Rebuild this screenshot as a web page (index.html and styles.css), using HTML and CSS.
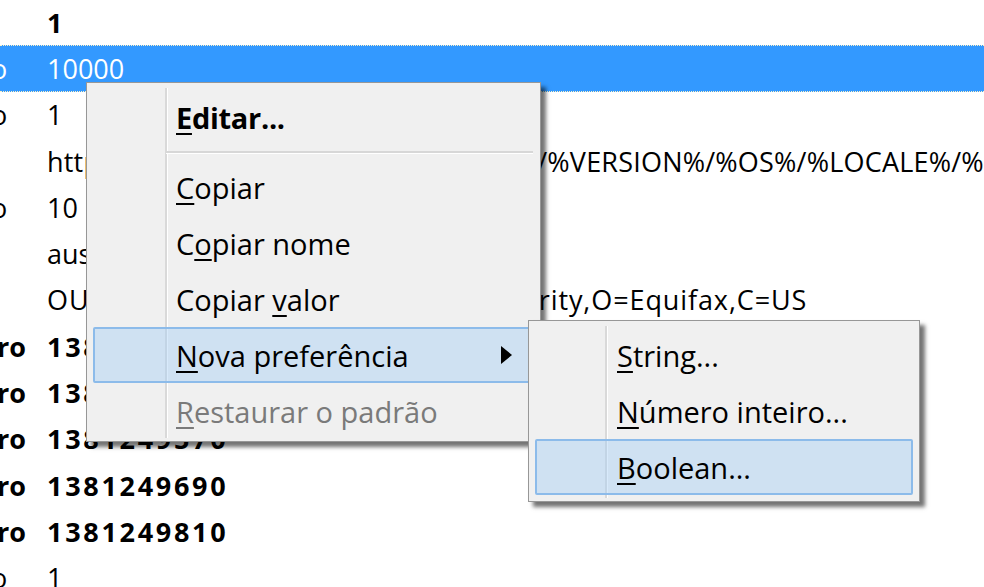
FILE: index.html
```html
<!DOCTYPE html>
<html lang="pt-BR">
<head>
<meta charset="utf-8">
<title>about:config</title>
<link rel="stylesheet" href="styles.css">
</head>
<body>
<div class="table">
  <div class="row bold"><span class="type"></span><span class="val">1</span></div>
  <div class="row sel"><span class="type"><span>inteiro</span></span><span class="val">10000</span></div>
  <div class="row"><span class="type"><span>inteiro</span></span><span class="val">1</span></div>
  <div class="row url"><span class="type"><span>string</span></span><span class="val">https://www.mozilla.com/pt-BR/firefox/%VERSION%/%OS%/%LOCALE%/%CHANNEL%/</span></div>
  <div class="row"><span class="type"><span>inteiro</span></span><span class="val">10</span></div>
  <div class="row"><span class="type"><span>string</span></span><span class="val">aus5.mozilla.org</span></div>
  <div class="row dn"><span class="type"><span>string</span></span><span class="val">OU=Equifax Secure Certificate Authority,O=Equifax,C=US</span></div>
  <div class="row bold"><span class="type"><span>inteiro</span></span><span class="val">1381249450</span></div>
  <div class="row bold"><span class="type"><span>inteiro</span></span><span class="val">1381249510</span></div>
  <div class="row bold"><span class="type"><span>inteiro</span></span><span class="val">1381249570</span></div>
  <div class="row bold"><span class="type"><span>inteiro</span></span><span class="val">1381249690</span></div>
  <div class="row bold"><span class="type"><span>inteiro</span></span><span class="val">1381249810</span></div>
  <div class="row"><span class="type"><span>inteiro</span></span><span class="val">1</span></div>
</div>

<div class="menu main">
  <div class="item default"><span class="label"><u>E</u>ditar...</span></div>
  <div class="sep"></div>
  <div class="item"><span class="label"><u>C</u>opiar</span></div>
  <div class="item"><span class="label">C<u>o</u>piar nome</span></div>
  <div class="item"><span class="label">Copiar <u>v</u>alor</span></div>
  <div class="item hot"><span class="label"><u>N</u>ova preferência</span><span class="arrow"></span></div>
  <div class="item disabled"><span class="label"><u>R</u>estaurar o padrão</span></div>
</div>

<div class="menu sub">
  <div class="item"><span class="label"><u>S</u>tring...</span></div>
  <div class="item"><span class="label"><u>N</u>úmero inteiro...</span></div>
  <div class="item hot"><span class="label"><u>B</u>oolean...</span></div>
</div>
</body>
</html>
```

FILE: styles.css
```css
html, body {
  margin: 0;
  padding: 0;
}
body {
  width: 984px;
  height: 587px;
  overflow: hidden;
  position: relative;
  background: #ffffff;
  color: #000000;
  font-family: "Open Sans", "Noto Sans", sans-serif;
  font-size: 27px;
}

/* preference table */
.table {
  margin-top: -1px;
  width: 984px;
  overflow: hidden;
}
.row {
  display: flex;
  align-items: center;
  height: 46.3px;
  box-sizing: border-box;
  white-space: nowrap;
  overflow: hidden;
}
.type {
  flex: none;
  width: 47px;
  overflow: hidden;
  display: flex;
}
.type span {
  flex: none;
  margin-left: -75px;
}
.val {
  flex: none;
}
.row.bold {
  font-weight: 700;
}
.row.bold .val {
  letter-spacing: 2.7px;
}
.row.bold .type span {
  margin-left: -65px;
}
.row.dn .val {
  letter-spacing: 0.9px;
}
.row.url .val {
  letter-spacing: 0.2px;
}
.row.sel {
  background: #3399ff;
  color: #ffffff;
  border-top: 1px dotted #fff3c4;
  border-bottom: 1px dotted #fff3c4;
}

/* context menus */
.menu {
  position: absolute;
  box-sizing: border-box;
  background-color: #f0f0f0;
  background-repeat: no-repeat;
  border: 1px solid #979797;
  box-shadow: 5px 5px 4px rgba(0, 0, 0, 0.55);
  display: flex;
  flex-direction: column;
  font-size: 29px;
}
.main {
  left: 86px;
  top: 82px;
  width: 455px;
  height: 360px;
  padding: 6px 6px 2px 6px;
  background-image: linear-gradient(#d9d9d9, #d9d9d9), linear-gradient(#ffffff, #ffffff);
  background-size: 2px calc(100% - 8px), 1px calc(100% - 8px);
  background-position: 78px 5px, 80px 5px;
}
.sub {
  left: 528px;
  top: 320px;
  width: 392px;
  height: 182px;
  padding: 6px 6px 5px 6px;
  background-image: linear-gradient(#d9d9d9, #d9d9d9), linear-gradient(#ffffff, #ffffff);
  background-size: 2px calc(100% - 8px), 1px calc(100% - 8px);
  background-position: 76px 5px, 78px 5px;
}
.item {
  flex: none;
  display: flex;
  align-items: center;
  height: 56px;
  box-sizing: border-box;
  padding-left: 83px;
  white-space: nowrap;
}
.sub .item {
  padding-left: 82px;
}
.item u {
  text-decoration-thickness: 2px;
  text-underline-offset: 4px;
}
.item.default {
  font-weight: 700;
  letter-spacing: -0.3px;
}
.item.disabled {
  color: #7a7a7a;
}
.item.hot {
  border: 2px solid #8cbbea;
  border-radius: 2px;
  background: rgba(163, 205, 245, 0.42);
  padding-left: 81px;
}
.sub .item.hot {
  padding-left: 80px;
}
.arrow {
  margin-left: auto;
  margin-right: 20px;
  width: 0;
  height: 0;
  border-left: 11px solid #000000;
  border-top: 9px solid transparent;
  border-bottom: 9px solid transparent;
}
.sep {
  flex: none;
  height: 14px;
  box-sizing: border-box;
  margin-left: 73px;
  margin-right: 1px;
  background-image: linear-gradient(#d7d7d7, #d7d7d7), linear-gradient(#ffffff, #ffffff);
  background-size: 100% 2px, 100% 1px;
  background-position: 0 6px, 0 8px;
  background-repeat: no-repeat;
}
```
